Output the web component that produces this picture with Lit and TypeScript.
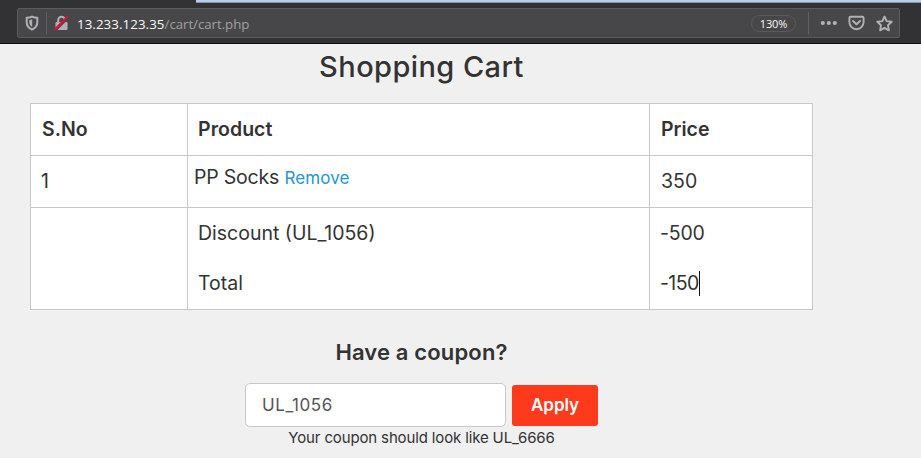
import { LitElement, html, css } from "lit";
import { customElement } from "lit/decorators.js";

@customElement("address-bar")
class AddressBar extends LitElement {
  static styles = css`
    :host { display: block; height: 44px; box-sizing: border-box; background: #323234; border-bottom: 1px solid #0c0c0d; font-family: "Open Sans", "Noto Sans", sans-serif; }
    .tab { height: 3px; margin-left: 196px; background: #b7cdea; border-bottom: 1px solid #8395b3; box-sizing: border-box; }
    .field { display: flex; align-items: center; box-sizing: border-box; width: 883px; height: 30px; margin: 5px 0 0 17px; border: 1px solid #5b5b5e; border-radius: 2px; background: #474749; }
    svg { display: block; flex: none; }
    .shield { margin-left: 7px; }
    .sep { width: 1px; height: 22px; background: #5f6066; }
    .s1 { margin-left: 7px; }
    .lock { margin-left: 7px; }
    .url { margin: 1px 0 0 8px; font-size: 13.3px; line-height: 20px; color: #f9f9fa; white-space: nowrap; flex: 1; letter-spacing: 0.08px; }
    .path { color: #a0a0a1; letter-spacing: -0.05px; }
    .zoom { box-sizing: border-box; width: 45px; height: 17px; border: 1px solid #5a5a5d; border-radius: 9px; font-size: 11px; line-height: 15px; text-align: center; color: #f9f9fa; letter-spacing: -0.1px; }
    .s2 { margin-left: 12px; }
    .dots { margin-left: 11px; }
    .pocket { margin-left: 11px; }
    .star { margin: 0 6px 0 11px; }
  `;
  render() {
    return html`
      <div class="tab"></div>
      <div class="field">
        <svg class="shield" width="14" height="16" viewBox="0 0 14 16"><path d="M7 1.700C5.300 2.500 3.300 2.800 1.700 2.800v4.400c0 3.500 2 6 5.300 7.300 3.300-1.300 5.300-3.800 5.300-7.300V2.800C10.700 2.800 8.700 2.500 7 1.700Z" fill="none" stroke="#b1b1b3" stroke-width="2" stroke-linejoin="round"/><path d="M7.200 4.300v7.700c-1.900-1-2.900-2.700-2.900-4.700V5c1.100-.1 2-.3 2.900-.7Z" fill="#b1b1b3"/></svg>
        <div class="sep s1"></div>
        <svg class="lock" width="15" height="16" viewBox="0 0 15 16"><path d="M4.200 8V5a3.300 3.300 0 0 1 6.600 0v3" fill="none" stroke="#b1b1b3" stroke-width="2"/><rect x="1.500" y="7" width="12" height="8" rx="1.200" fill="#b1b1b3"/><path d="M1.300 16 15 2.400" stroke="#474749" stroke-width="1.600"/><path d="M.800 14.600 14 1.200" stroke="#f0063d" stroke-width="2.200"/></svg>
        <div class="url">13.233.123.35<span class="path">/cart/cart.php</span></div>
        <div class="zoom">130%</div>
        <div class="sep s2"></div>
        <svg class="dots" width="17" height="6" viewBox="0 0 17 6"><g fill="#b1b1b3"><circle cx="2.800" cy="3" r="2.100"/><circle cx="8.800" cy="3" r="2.100"/><circle cx="14.800" cy="3" r="2.100"/></g></svg>
        <svg class="pocket" width="17" height="16" viewBox="0 0 17 16"><path d="M2.500 1.800h12q1.100 0 1.100 1.100v4.200a7.100 7.100 0 0 1-14.200 0V2.900q0-1.100 1.100-1.100Z" fill="none" stroke="#b1b1b3" stroke-width="1.900"/><path d="m5 6 3.500 3.300L12 6" fill="none" stroke="#b1b1b3" stroke-width="2" stroke-linecap="round" stroke-linejoin="round"/></svg>
        <svg class="star" width="17" height="17" viewBox="0 0 17 17"><path d="m8.500 1.500 2.100 4.600 5.100.600-3.700 3.500.9 5.100-4.400-2.500-4.400 2.500.9-5.100-3.700-3.500 5.100-.600Z" fill="none" stroke="#b1b1b3" stroke-width="1.900" stroke-linejoin="round"/></svg>
      </div>`;
  }
}

@customElement("app-root")
class AppRoot extends LitElement {
  static styles = css`
    :host { display: block; width: 921px; height: 458px; overflow: hidden; background: #f0f0f0; color: #333; font-family: Inter, "Open Sans", sans-serif; }
    .page { width: 783px; margin-left: 30px; }
    h1 { margin: 0; padding-top: 3px; height: 56px; font-size: 29px; font-weight: 500; line-height: 40px; text-align: center; letter-spacing: 0.42px; }
    .table { display: grid; grid-template-columns: 157px 462px 163px; grid-template-rows: 52px 52px 102px; border: solid #c8c8c8; border-width: 1px 0 0 1px; background: #fff; font-size: 19.500px; width: 782px; }
    .cell { box-sizing: border-box; border: solid #c8c8c8; border-width: 0 1px 1px 0; padding: 0 11px 0 10px; line-height: 51px; white-space: nowrap; }
    .head { font-weight: 600; padding-left: 11px; }
    .product { padding-left: 10px; letter-spacing: 0.05px; }
    .item { padding-left: 6px; line-height: 43px; letter-spacing: -0.2px; }
    .item a { color: #2496d3; font-size: 17px; letter-spacing: 0.1px; }
    .price { padding-left: 11px; }
    .sum div { line-height: 50px; }
    .sum .neg { letter-spacing: -0.200px; }
    .sum .total { letter-spacing: -0.600px; }
    .caret { display: inline-block; width: 1px; height: 25px; background: #111; vertical-align: middle; margin-top: -2px; }
    h3 { margin: 27px 0 0; font-size: 22px; font-weight: 600; line-height: 30px; text-align: center; letter-spacing: 0.15px; }
    .coupon { display: flex; align-items: center; gap: 6px; margin: 16px 0 0 215px; }
    .input { box-sizing: border-box; width: 261px; height: 44px; border: 1px solid #c8c8c8; border-radius: 5px; background: #fff; padding-left: 16px; font-size: 17px; line-height: 42px; color: #555; letter-spacing: 0.6px; }
    .apply { width: 86px; height: 41px; margin-top: 1px; border: 0; border-radius: 3px; padding: 0; background: #fd3a1b; color: #fff; font: 600 17px/41px Inter, sans-serif; }
    .hint { text-align: center; font-size: 15px; line-height: 22px; letter-spacing: -0.14px; }
  `;
  render() {
    return html`
      <address-bar></address-bar>
      <div class="page">
        <h1>Shopping Cart</h1>
        <div class="table">
          <div class="cell head">S.No</div><div class="cell head product">Product</div><div class="cell head">Price</div>
          <div class="cell">1</div><div class="cell item">PP Socks <a>Remove</a></div><div class="cell price">350</div>
          <div class="cell"></div>
          <div class="cell sum"><div>Discount (UL_1056)</div><div>Total</div></div>
          <div class="cell sum"><div class="neg">-500</div><div class="total">-150<span class="caret"></span></div></div>
        </div>
        <h3>Have a coupon?</h3>
        <div class="coupon"><div class="input">UL_1056</div><button class="apply">Apply</button></div>
        <div class="hint">Your coupon should look like UL_6666</div>
      </div>`;
  }
}
